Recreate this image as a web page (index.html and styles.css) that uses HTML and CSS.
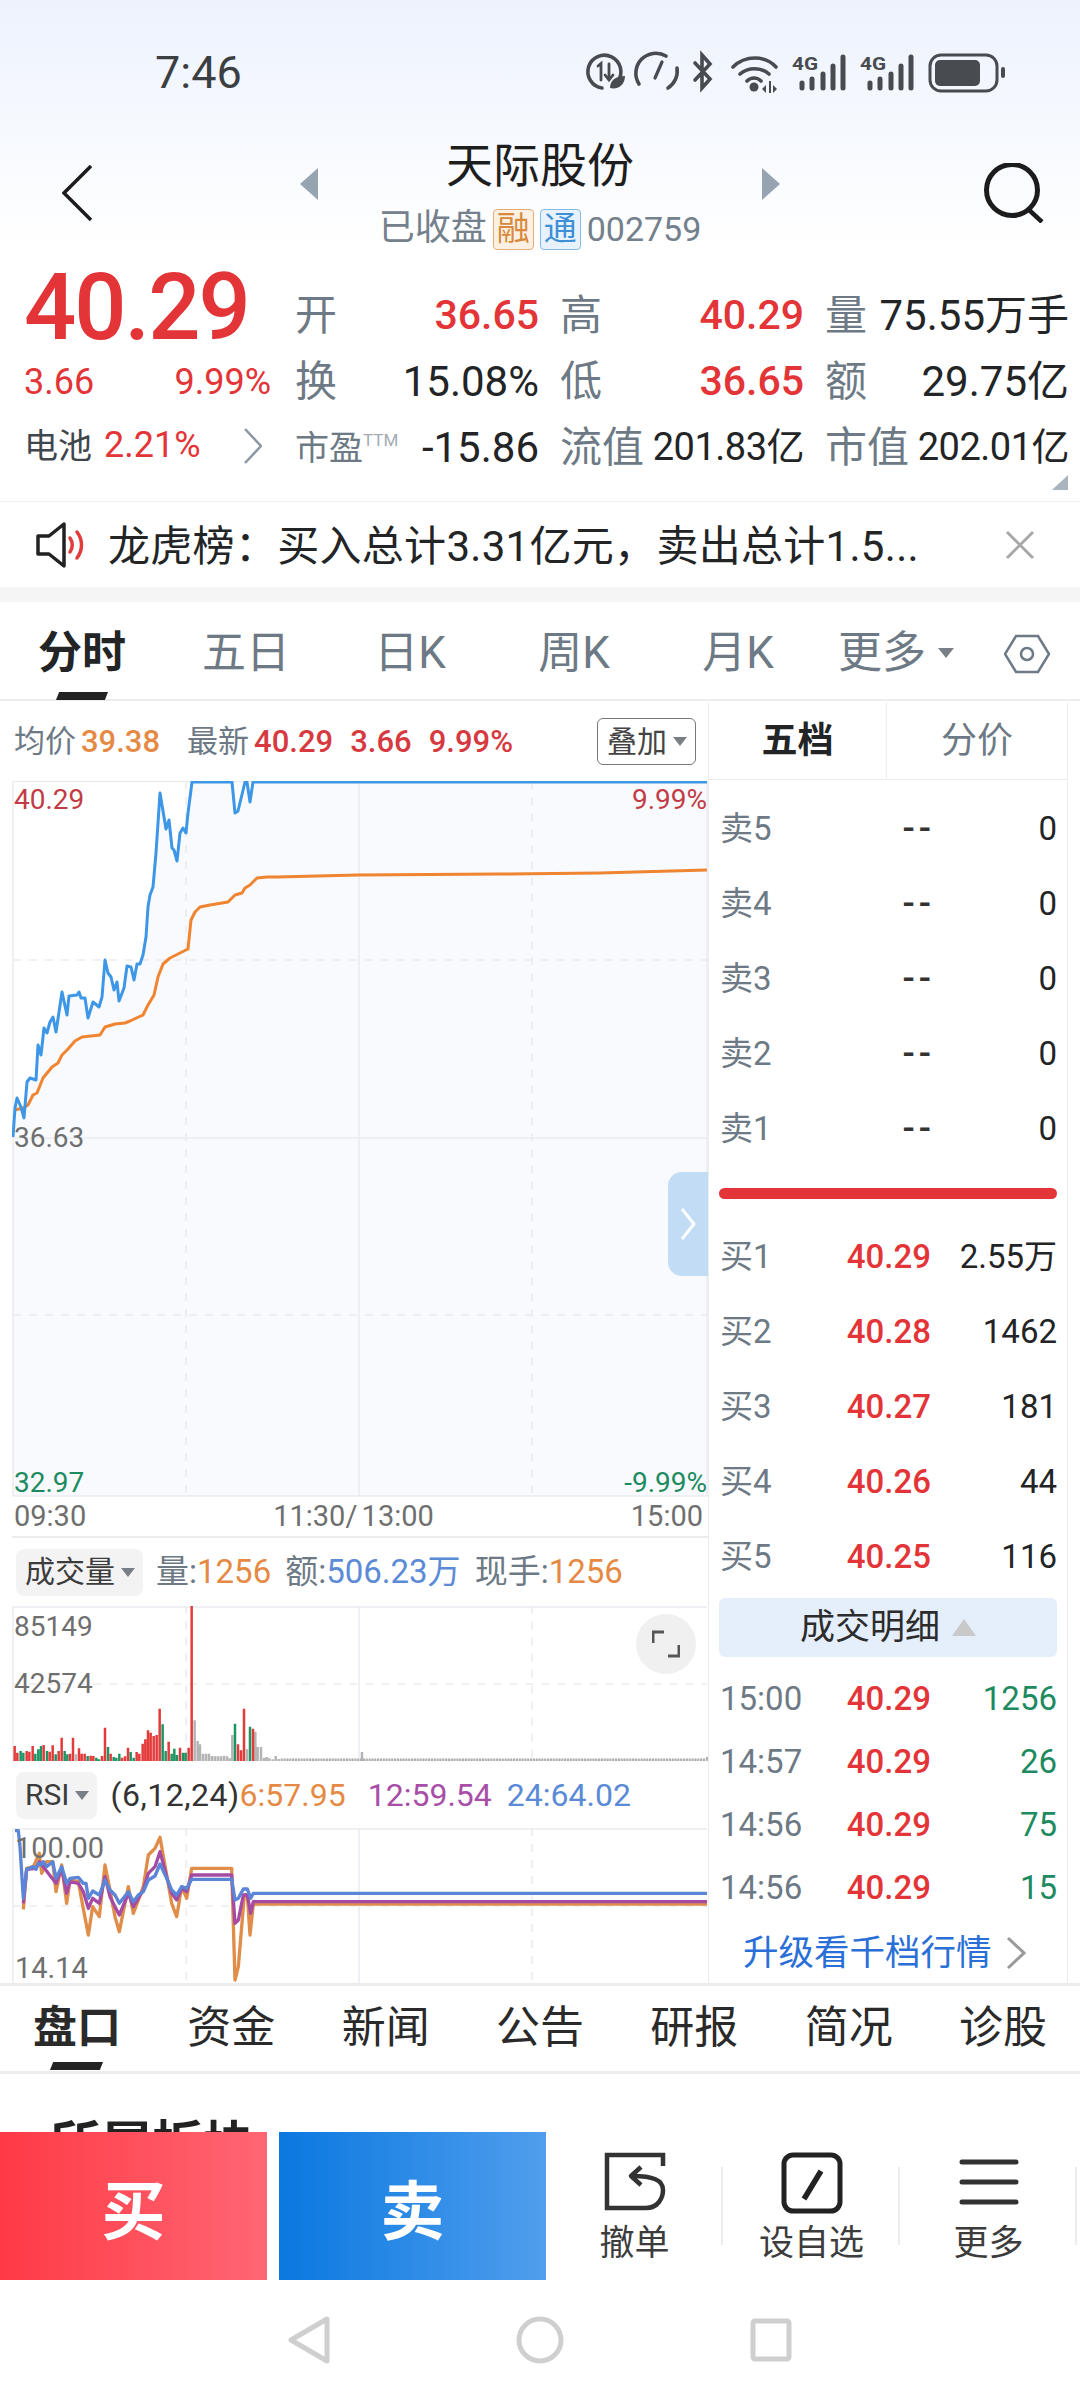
FILE: index.html
```html
<!DOCTYPE html>
<html lang="zh-CN">
<head>
    <meta charset="UTF-8">
    <meta name="viewport" content="width=device-width, initial-scale=1.0">
    <title>天际股份 002759</title>
    <link rel="stylesheet" href="styles.css">
</head>
<body>
    <div class="top">
        <!-- Status bar -->
        <div class="status-bar">
            <span class="clock">7:46</span>
            <svg class="status-icons" viewBox="560 30 480 70" width="480" height="70">
                <g fill="none" stroke="#484b50" stroke-width="3.6" stroke-linecap="round">
                    <path d="M618 81A16.5 16.5 0 1 0 602 88"/>
                    <path d="M598 66l3-2.500V80M609 64V80M605 75l4 5 4-5" stroke-width="2.800"/>
                    <path d="M639 84A20 20 0 0 1 666 56M677 68A20 20 0 0 1 668 88"/>
                    <path d="M662 62L655 78" stroke-width="3.200"/>
                    <path d="M695 63L710 79L702 88V55L710 64L695 80"/>
                    <path d="M733 67C745 55 765 55 776 67M740 74C748 67 761 67 769 74M747 81C751 77 757 77 761 81"/>
                </g>
                <path d="M610 88C610 80 616 76 625 76C625 84 619 90 610 88Z" fill="#484b50"/>
                <circle cx="754" cy="87" r="4.500" fill="#484b50"/>
                <path d="M766 85l-4 4 4 4zM769 81h2v12h-2zM773 85l4 4-4 4z" fill="#484b50"/>
                <g fill="#484b50" font-family="Roboto, sans-serif" font-size="19" font-weight="700">
                    <text x="792" y="70" textLength="26" lengthAdjust="spacingAndGlyphs">4G</text>
                    <text x="860" y="70" textLength="26" lengthAdjust="spacingAndGlyphs">4G</text>
                </g>
                <g stroke="#484b50" stroke-width="5" stroke-linecap="round">
                    <path d="M802 83v5M812 79v9M823 74v14M833 66v22M843 57v31"/>
                    <path d="M870 83v5M880 79v9M891 74v14M901 66v22M911 57v31"/>
                </g>
                <rect x="930" y="55" width="67" height="36" rx="11" fill="none" stroke="#484b50" stroke-width="3"/>
                <rect x="935" y="60" width="45" height="26" rx="5" fill="#484b50"/>
                <rect x="1001" y="67" width="4" height="11" rx="2" fill="#484b50"/>
            </svg>
        </div>

        <!-- Title row -->
        <header class="stock-nav">
            <div class="nav-left">
                <svg width="30" height="56" viewBox="0 0 30 56"><path d="M29 1L2 28L29 55" fill="none" stroke="#1c1c1c" stroke-width="3.500"/></svg>
            </div>
            <div class="nav-center">
                <svg class="nav-arrow" width="18" height="32" viewBox="0 0 18 32"><path d="M18 0V32L0 16Z" fill="#96a4b2"/></svg>
                <div class="stock-title">
                    <h1>天际股份</h1>
                    <div class="stock-sub">
                        <span>已收盘</span>
                        <span class="tag tag-rong">融</span>
                        <span class="tag tag-tong">通</span>
                        <span class="stock-code">002759</span>
                    </div>
                </div>
                <svg class="nav-arrow" width="18" height="32" viewBox="0 0 18 32"><path d="M0 0V32L18 16Z" fill="#96a4b2"/></svg>
            </div>
            <div class="nav-right">
                <svg width="62" height="60" viewBox="0 0 62 60" fill="none" stroke="#1c1c1c" stroke-width="5"><circle cx="29" cy="27" r="25.500"/><path d="M45 46L59 59" stroke-width="4.500"/></svg>
            </div>
        </header>

        <!-- Quote block -->
        <section class="quote">
            <div class="quote-left">
                <div class="price">40.29</div>
                <div class="change"><span>3.66</span><span>9.99%</span></div>
                <div class="concept">
                    <span class="concept-name">电池</span>
                    <span class="concept-pct">2.21%</span>
                    <svg width="18" height="36" viewBox="0 0 18 36"><path d="M1 1L17 18L1 35" fill="none" stroke="#8c98a4" stroke-width="2.500"/></svg>
                </div>
            </div>
            <div class="quote-grid">
                <div class="cell"><span class="lbl">开</span><span class="val up">36.65</span></div>
                <div class="cell"><span class="lbl">高</span><span class="val up">40.29</span></div>
                <div class="cell"><span class="lbl">量</span><span class="val">75.55万手</span></div>
                <div class="cell"><span class="lbl">换</span><span class="val">15.08%</span></div>
                <div class="cell"><span class="lbl">低</span><span class="val up">36.65</span></div>
                <div class="cell"><span class="lbl">额</span><span class="val">29.75亿</span></div>
                <div class="cell"><span class="lbl lbl-small">市盈<sup>TTM</sup></span><span class="val">-15.86</span></div>
                <div class="cell"><span class="lbl">流值</span><span class="val val-small">201.83亿</span></div>
                <div class="cell"><span class="lbl">市值</span><span class="val val-small">202.01亿</span></div>
            </div>
            <span class="corner"></span>
        </section>
    </div>

    <!-- Notice -->
    <div class="notice">
        <svg width="50" height="46" viewBox="0 0 50 46" fill="none">
            <path d="M2 14H13L28 2V44L13 32H2Z" stroke="#222" stroke-width="3.500" stroke-linejoin="round"/>
            <path d="M34 16C37 20 37 26 34 30M41 10C47 18 47 28 41 36" stroke="#e33a3a" stroke-width="3.500" stroke-linecap="round"/>
        </svg>
        <p class="notice-text">龙虎榜：买入总计3.31亿元，卖出总计1.5...</p>
        <svg width="30" height="30" viewBox="0 0 30 30"><path d="M2 2L28 28M28 2L2 28" stroke="#a8a8a8" stroke-width="3"/></svg>
    </div>

    <!-- Period tabs -->
    <nav class="period-tabs">
        <a class="period active">分时</a>
        <a class="period">五日</a>
        <a class="period">日K</a>
        <a class="period">周K</a>
        <a class="period">月K</a>
        <a class="period-more">更多<i class="caret"></i></a>
        <svg class="hex" width="46" height="40" viewBox="0 0 46 40" fill="none" stroke="#6d7a85" stroke-width="2.500"><path d="M12 2H34L45 20L34 38H12L1 20Z"/><circle cx="23" cy="20" r="6"/></svg>
    </nav>

    <div class="board">
        <div class="charts">
            <div class="chart-info">
                <span class="gray">均价</span><span class="orange">39.38</span>
                <span class="gray gap-l">最新</span><span class="red">40.29</span>
                <span class="red gap-m">3.66</span>
                <span class="red gap-m">9.99%</span>
                <span class="overlay-btn">叠加<i class="caret"></i></span>
            </div>

            <!-- Intraday price chart -->
            <div class="main-chart">
                <svg viewBox="12 781 696 716" width="696" height="716">
                    <path class="area" d="M13 1137L15 1108L17 1098L21 1107L24 1118L27 1082L30 1078L36 1080L38 1045L41 1055L44 1028L47 1033L50 1022L53 1017L56 1032L62 992L67 1015L69 996L77 995L79 992L81 998L85 998L88 1018L93 1002L99 1007L102 997L105 960L108 973L111 977L114 990L117 982L119 1001L124 988L127 966L131 967L134 980L137 964L140 964L143 955L146 937L148 907L150 895L153 887L156 853L160 793L166 829L169 820L172 848L174 850L177 861L180 833L183 828L186 833L188 813L192 782H232L235 813L238 811L245 782H247L250 802L253 782H707V1496H13Z"/>
                    <g class="grid">
                        <path d="M13 781V1496M707 781V1496M359 781V1496M13 781.500H707M13 1138H707M13 1496H707"/>
                        <path class="dash" d="M186 781V1496M532 781V1496M13 960H707M13 1315H707"/>
                    </g>
                    <path class="line-avg" d="M15 1110L23 1108L28 1105L33 1095L37 1093L43 1078L52 1067L58 1063L62 1055L68 1049L75 1041L82 1037L100 1035L105 1027L115 1024L125 1023L130 1021L143 1015L148 1005L154 995L158 977L163 964L170 958L188 949L191 920L195 912L200 907L210 905L228 902L235 895L242 893L245 888L250 885L257 878L267 877L277 877L358 875L500 874L600 873L707 870"/>
                    <path class="line-price" d="M13 1137L15 1108L17 1098L21 1107L24 1118L27 1082L30 1078L36 1080L38 1045L41 1055L44 1028L47 1033L50 1022L53 1017L56 1032L62 992L67 1015L69 996L77 995L79 992L81 998L85 998L88 1018L93 1002L99 1007L102 997L105 960L108 973L111 977L114 990L117 982L119 1001L124 988L127 966L131 967L134 980L137 964L140 964L143 955L146 937L148 907L150 895L153 887L156 853L160 793L166 829L169 820L172 848L174 850L177 861L180 833L183 828L186 833L188 813L192 782H232L235 813L238 811L245 782H247L250 802L253 782H707"/>
                </svg>
                <span class="axis-label tl up-dark">40.29</span>
                <span class="axis-label tr up-dark">9.99%</span>
                <span class="axis-label ml">36.63</span>
                <span class="axis-label bl down">32.97</span>
                <span class="axis-label br down">-9.99%</span>
                <div class="side-handle">
                    <svg width="16" height="34" viewBox="0 0 16 34"><path d="M2 2L14 17L2 32" fill="none" stroke="#fff" stroke-width="3"/></svg>
                </div>
            </div>

            <div class="time-axis"><span>09:30</span><span class="time-mid">11:30/ 13:00</span><span>15:00</span></div>

            <div class="sub-head vol-head">
                <span class="picker">成交量<i class="caret"></i></span>
                <span class="gray sub-l">量:</span><span class="orange">1256</span>
                <span class="gray gap-s">额:</span><span class="blue">506.23万</span>
                <span class="gray gap-s">现手:</span><span class="orange">1256</span>
            </div>

            <!-- Volume bars -->
            <div class="vol-chart">
                <svg viewBox="12 1606 696 156" width="696" height="156">
                    <g class="grid">
                        <path d="M13 1606V1762M359 1606V1762M13 1607H707"/>
                        <path class="dash" d="M186 1606V1762M532 1606V1762M13 1684H707"/>
                    </g>
                    <g transform="translate(0 1590) scale(.33333)" fill="none" stroke-width="7.500">
                        <path stroke="#b4b4b4" d="M228 513v-20M584 513v-122M593 513v-60M600 513v-50M609 513v-22M618 513v-22M627 513v-22M636 513v-15M645 513v-14M654 513v-14M663 513v-14M672 513v-16M681 513v-14M689 513v-8M697 513v-78M741 513v-35M766 513v-88M773 513v-42M783 513v-42M792 513v-10M800 513v-12M808 513v-8M818 513v-5M827 513v-15M836 513v-6M1086 513v-27M2121 513v-12"/>
                        <path stroke="#adadad" stroke-dasharray="6.500 2" d="M842 509.500H2115"/>
                        <path stroke="#1f9463" d="M62 513v-30M70 513v-25M106 513v-22M115 513v-35M123 513v-45M141 513v-30M167 513v-20M194 513v-30M202 513v-20M263 513v-15M289 513v-10M297 513v-5M324 513v-42M341 513v-12M349 513v-10M358 513v-22M392 513v-27M401 513v-10M488 513v-110M497 513v-30M515 513v-22M523 513v-37M531 513v-18M549 513v-25M557 513v-25M705 513v-112M750 513v-103"/>
                        <path stroke="#e33a3a" d="M44 513v-45M52 513v-25M80 513v-30M88 513v-28M98 513v-45M131 513v-48M149 513v-28M158 513v-47M176 513v-30M185 513v-70M210 513v-22M219 513v-70M237 513v-38M245 513v-22M254 513v-22M272 513v-16M280 513v-15M306 513v-15M315 513v-100M332 513v-22M366 513v-10M375 513v-14M384 513v-40M410 513v-27M418 513v-22M428 513v-52M436 513v-65M444 513v-92M452 513v-85M461 513v-75M470 513v-78M479 513v-157M506 513v-58M540 513v-40M566 513v-40M575 513v-465M714 513v-50M723 513v-32M732 513v-157M759 513v-97"/>
                    </g>
                </svg>
                <span class="axis-label vol-max">85149</span>
                <span class="axis-label vol-mid">42574</span>
                <span class="expand-btn">
                    <svg width="28" height="28" viewBox="0 0 28 28" fill="none" stroke="#555" stroke-width="3"><path d="M1 13V2H12M27 15V26H16"/></svg>
                </span>
            </div>

            <div class="sub-head rsi-head">
                <span class="picker">RSI<i class="caret"></i></span>
                <span class="dark rsi-params">(6,12,24)</span><span class="orange">6:57.95</span>
                <span class="purple gap-rsi">12:59.54</span>
                <span class="blue gap-rsi2">24:64.02</span>
            </div>

            <!-- RSI lines -->
            <div class="rsi-chart">
                <svg viewBox="12 1828 696 156" width="696" height="156">
                    <g class="grid">
                        <path d="M13 1828V1984M359 1828V1984M13 1829H707"/>
                        <path class="dash" d="M186 1828V1984M532 1828V1984M13 1906H707"/>
                    </g>
                    <g transform="translate(0 1590) scale(.33333)" fill="none" stroke-width="10" stroke-linejoin="round">
                        <path stroke="#e08d4a" d="M70 958L80 835L100 830L118 790L125 850L140 815L158 815L168 905L185 825L200 940L210 870L235 875L245 930L265 1035L278 950L298 980L315 825L330 900L345 980L358 1025L385 890L400 970L430 890L445 795L465 775L480 742L500 855L515 940L530 980L545 890L560 925L575 835H695L705 1170L715 1130L733 915H742L750 1035L760 942H2121"/>
                        <path stroke="#a64ba3" d="M70 940L80 838L108 835L118 815L168 880L185 835L200 910L210 875L235 880L250 905L265 955L278 925L298 940L315 860L330 920L345 950L358 975L385 910L400 950L430 900L445 850L465 830L480 785L500 860L515 910L530 930L545 895L560 905L575 855H695L705 1000L715 990L730 915H742L752 970L760 935H2121"/>
                        <path stroke="#5b85d6" d="M45 722H55L60 770L70 925L80 838L100 830L108 838L115 820L122 825L130 815L140 830L158 815L168 865L185 830L200 880L210 865L235 862L250 880H258L265 925L278 903L298 915L315 870L330 900L345 915L358 940L385 905L400 935L415 915L430 905L445 870L465 858L480 822L500 865L515 900L530 915L545 890L560 895L575 868H695L705 930L715 925L730 897H742L752 925L760 910H2121"/>
                    </g>
                </svg>
                <span class="axis-label rsi-max">100.00</span>
                <span class="axis-label rsi-min">14.14</span>
            </div>
        </div>

        <!-- Order book -->
        <aside class="depth">
            <div class="depth-tabs"><span class="active">五档</span><span>分价</span></div>
            <div class="sell-list">
                <div class="row"><span class="lbl">卖5</span><span class="p dash">--</span><span class="v">0</span></div>
                <div class="row"><span class="lbl">卖4</span><span class="p dash">--</span><span class="v">0</span></div>
                <div class="row"><span class="lbl">卖3</span><span class="p dash">--</span><span class="v">0</span></div>
                <div class="row"><span class="lbl">卖2</span><span class="p dash">--</span><span class="v">0</span></div>
                <div class="row"><span class="lbl">卖1</span><span class="p dash">--</span><span class="v">0</span></div>
            </div>
            <div class="ratio-bar"></div>
            <div class="buy-list">
                <div class="row"><span class="lbl">买1</span><span class="p">40.29</span><span class="v">2.55万</span></div>
                <div class="row"><span class="lbl">买2</span><span class="p">40.28</span><span class="v">1462</span></div>
                <div class="row"><span class="lbl">买3</span><span class="p">40.27</span><span class="v">181</span></div>
                <div class="row"><span class="lbl">买4</span><span class="p">40.26</span><span class="v">44</span></div>
                <div class="row"><span class="lbl">买5</span><span class="p">40.25</span><span class="v">116</span></div>
            </div>
            <div class="detail-head">成交明细<i class="caret-up"></i></div>
            <div class="trades">
                <div class="row"><span class="lbl">15:00</span><span class="p">40.29</span><span class="v down">1256</span></div>
                <div class="row"><span class="lbl">14:57</span><span class="p">40.29</span><span class="v down">26</span></div>
                <div class="row"><span class="lbl">14:56</span><span class="p">40.29</span><span class="v down">75</span></div>
                <div class="row"><span class="lbl">14:56</span><span class="p">40.29</span><span class="v down">15</span></div>
            </div>
            <a class="upgrade">升级看千档行情
                <svg width="20" height="34" viewBox="0 0 20 34"><path d="M2 2L18 17L2 32" fill="none" stroke="#9a9a9a" stroke-width="3"/></svg>
            </a>
        </aside>
    </div>

    <!-- Info tabs -->
    <nav class="info-tabs">
        <a class="info active">盘口</a>
        <a class="info">资金</a>
        <a class="info">新闻</a>
        <a class="info">公告</a>
        <a class="info">研报</a>
        <a class="info">简况</a>
        <a class="info">诊股</a>
    </nav>

    <div class="section-peek"><h2>所属板块</h2></div>

    <!-- Trade bar -->
    <div class="trade-bar">
        <button class="trade buy">买</button>
        <button class="trade sell">卖</button>
        <div class="action">
            <svg width="62" height="62" viewBox="0 0 62 62" fill="none" stroke="#333" stroke-width="4.500">
                <path d="M59 14V3H3V56H42C54 56 59 46 59 38C59 28 49 24 28 24"/>
                <path d="M37 15L27 24L37 33" stroke-linejoin="round"/>
            </svg>
            <span>撤单</span>
        </div>
        <div class="action">
            <svg width="62" height="62" viewBox="0 0 62 62" fill="none" stroke="#222">
                <rect x="3" y="3" width="56" height="56" rx="9" stroke-width="5"/>
                <path d="M40 19L23 47" stroke-width="5.500"/>
            </svg>
            <span>设自选</span>
        </div>
        <div class="action">
            <svg width="62" height="62" viewBox="0 0 62 62" stroke="#333" stroke-width="5" stroke-linecap="round"><path d="M4 10H58M4 30H58M4 50H58"/></svg>
            <span>更多</span>
        </div>
    </div>

    <!-- System navigation -->
    <div class="sys-nav">
        <svg width="42" height="48" viewBox="0 0 42 48" fill="none" stroke="#cfcfcf" stroke-width="5" stroke-linejoin="round"><path d="M39 3V45L3 24Z"/></svg>
        <svg width="48" height="48" viewBox="0 0 48 48" fill="none" stroke="#cfcfcf" stroke-width="5"><circle cx="24" cy="24" r="21"/></svg>
        <svg width="42" height="44" viewBox="0 0 42 44" fill="none" stroke="#cfcfcf" stroke-width="5"><rect x="3" y="3" width="36" height="38" rx="2"/></svg>
    </div>
</body>
</html>
```

FILE: styles.css
```css
:root {
    --red: #e33437;
    --red-dark: #c23c46;
    --green: #1d8a5f;
    --orange: #e58a45;
    --blue: #5b8bd6;
    --purple: #a84ea8;
    --label: #6d7a85;
    --text: #222426;
    --line: #ececec;
}

* {
    box-sizing: border-box;
}

body {
    margin: 0;
    width: 1080px;
    height: 2400px;
    overflow: hidden;
    background-color: #fff;
    color: var(--text);
    font-family: Roboto, "Noto Sans CJK SC", sans-serif;
    line-height: 1.2;
}

svg {
    display: block;
    flex-shrink: 0;
}

h1, h2, p {
    margin: 0;
    font-weight: 400;
}

/* Header area */
.top {
    height: 501px;
    background: linear-gradient(to bottom, #edf2fd 0, #f6f9fe 130px, #fff 250px);
}

.status-bar {
    display: flex;
    height: 146px;
    padding: 0 40px 0 155px;
}

.clock {
    font-size: 45px;
    line-height: 146px;
    color: #3c3f42;
}

.status-icons {
    margin: 30px 0 0 auto;
}

.stock-nav {
    display: grid;
    grid-template-columns: 300px 480px 300px;
    height: 108px;
}

.nav-left {
    padding: 19px 0 0 62px;
}

.nav-right {
    display: flex;
    justify-content: flex-end;
    padding: 17px 35px 0 0;
}

.nav-center {
    display: flex;
    justify-content: space-between;
}

.nav-arrow {
    margin-top: 22px;
}

.stock-title {
    text-align: center;
}

.stock-title h1 {
    font-size: 47px;
    line-height: 40px;
    color: #1e1e1e;
}

.stock-sub {
    display: flex;
    align-items: center;
    justify-content: center;
    gap: 6px;
    height: 40px;
    margin-top: 23px;
    font-size: 36px;
    color: #74808b;
}

.stock-code {
    font-size: 34px;
}

.tag {
    width: 41px;
    height: 41px;
    border: 1px solid;
    border-radius: 4px;
    font-size: 33px;
    line-height: 38px;
    text-align: center;
}

.tag-rong {
    color: #d8893c;
    background-color: #fbf0e2;
    border-color: #e4ad73;
}

.tag-tong {
    color: #3d8fd8;
    background-color: #e7f2fc;
    border-color: #86bbe6;
}

/* Quote block */
.quote {
    position: relative;
    display: flex;
    padding-top: 12px;
}

.quote-left {
    width: 295px;
    padding-left: 24px;
    flex-shrink: 0;
}

.price {
    height: 83px;
    font-size: 92px;
    line-height: 83px;
    font-weight: 500;
    letter-spacing: -2px;
    color: var(--red);
}

.change {
    display: flex;
    justify-content: space-between;
    width: 247px;
    height: 66px;
    font-size: 36px;
    line-height: 66px;
    color: var(--red);
}

.concept {
    display: flex;
    align-items: center;
    height: 62px;
}

.concept-name {
    width: 80px;
    font-size: 34px;
    color: #3f474d;
}

.concept-pct {
    width: 140px;
    font-size: 36px;
    color: var(--red);
}

.quote-grid {
    display: grid;
    grid-template-columns: 244px 244px 244px;
    grid-auto-rows: 66px;
    column-gap: 21px;
    margin-top: 17px;
}

.cell {
    display: flex;
    align-items: center;
    justify-content: space-between;
    white-space: nowrap;
}

.lbl {
    color: var(--label);
}

.cell .lbl {
    font-size: 42px;
}

.cell .lbl-small {
    font-size: 34px;
}

.lbl-small sup {
    font-size: 17px;
    color: #a3abb3;
    vertical-align: 14px;
    line-height: 0;
}

.val {
    font-size: 42px;
    color: var(--text);
}

.val.up {
    color: var(--red);
    font-size: 41px;
    font-weight: 500;
}

.val-small {
    font-size: 38px;
    letter-spacing: -0.5px;
}

.corner {
    position: absolute;
    right: 12px;
    top: 221px;
    border-left: 16px solid transparent;
    border-bottom: 15px solid #a9b4bf;
}

/* Notice */
.notice {
    display: flex;
    align-items: center;
    height: 101px;
    padding: 0 45px 0 36px;
    border-top: 1px solid #f0f0f0;
    border-bottom: 15px solid #f5f5f5;
}

.notice-text {
    flex: 1;
    margin: 5px 0 0 22px;
    font-size: 42px;
    letter-spacing: 0.3px;
    color: var(--text);
    white-space: nowrap;
}

/* Period tabs */
.period-tabs {
    display: flex;
    align-items: center;
    height: 99px;
    border-bottom: 2px solid var(--line);
    position: relative;
    padding-top: 6px;
}

.period {
    position: relative;
    width: 164px;
    font-size: 44px;
    text-align: center;
    color: var(--label);
}

.period.active {
    font-weight: 700;
    color: var(--text);
}

.period.active::after {
    content: "";
    position: absolute;
    left: 56px;
    bottom: -20px;
    width: 52px;
    height: 8px;
    background-color: #222;
    clip-path: polygon(6% 0, 100% 0, 94% 100%, 0 100%);
}

.period-more {
    display: flex;
    align-items: center;
    margin-left: 18px;
    font-size: 44px;
    color: var(--label);
}

.caret {
    display: inline-block;
    margin-left: 6px;
    border-left: 7px solid transparent;
    border-right: 7px solid transparent;
    border-top: 9px solid #7a7f85;
}

.period-more .caret {
    margin-left: 12px;
    border-left-width: 8px;
    border-right-width: 8px;
    border-top-width: 10px;
}

.hex {
    margin-left: 50px;
}

/* Chart + order book */
.board {
    display: flex;
    height: 1285px;
    padding: 1px 0 0 12px;
    border-bottom: 3px solid var(--line);
    width: 1080px;
}

.charts {
    width: 696px;
    flex-shrink: 0;
}

.gray { color: var(--label); }
.orange { color: var(--orange); }
.red { color: #d63a40; }
.blue { color: var(--blue); }
.purple { color: var(--purple); }
.dark { color: #333; }
.up-dark { color: var(--red-dark); }
.down { color: var(--green); }

.chart-info {
    display: flex;
    align-items: center;
    height: 79px;
    padding-left: 2px;
    font-size: 31px;
    white-space: nowrap;
}

.chart-info .orange,
.chart-info .red {
    font-weight: 500;
}

.chart-info .gray + span {
    margin-left: 5px;
}

.gap-l { margin-left: 27px; }
.gap-m { margin-left: 17px; }
.gap-s { margin-left: 14px; }

.overlay-btn {
    display: flex;
    align-items: center;
    height: 47px;
    margin-left: auto;
    margin-right: 12px;
    padding: 0 8px 0 9px;
    border: 1px solid #777;
    border-radius: 6px;
    font-size: 30px;
    color: #444;
}

.main-chart,
.vol-chart,
.rsi-chart {
    position: relative;
}

.main-chart { height: 716px; }
.vol-chart { height: 156px; }
.rsi-chart { height: 156px; }

.area {
    fill: #f8fafe;
}

.grid path {
    fill: none;
    stroke: #e9ecf0;
    stroke-width: 1.5;
}

.grid .dash {
    stroke-dasharray: 8 8;
}

.line-price,
.line-avg {
    fill: none;
    stroke-width: 3;
    stroke-linejoin: round;
}

.line-price { stroke: #3d97e6; }
.line-avg { stroke: #ef8431; }

.axis-label {
    position: absolute;
    font-size: 28px;
    line-height: 32px;
    color: #6f6f6f;
}

.axis-label.up-dark { color: var(--red-dark); }
.axis-label.down { color: var(--green); }

.tl { left: 2px; top: 3px; }
.tr { right: 1px; top: 3px; }
.ml { left: 2px; top: 341px; }
.bl { left: 2px; top: 686px; }
.br { right: 1px; top: 686px; }
.vol-max { left: 2px; top: 5px; }
.vol-mid { left: 2px; top: 62px; }
.rsi-max { left: 3px; top: 4px; font-size: 29px; }
.rsi-min { left: 3px; top: 124px; font-size: 29px; }

.side-handle {
    position: absolute;
    right: 0;
    top: 391px;
    display: flex;
    align-items: center;
    justify-content: center;
    width: 40px;
    height: 104px;
    background-color: #c3dcf6;
    border-radius: 14px 0 0 14px;
}

.expand-btn {
    position: absolute;
    left: 624px;
    top: 8px;
    display: flex;
    align-items: center;
    justify-content: center;
    width: 60px;
    height: 60px;
    background-color: #f0f0f0;
    border-radius: 50%;
}

.time-axis {
    display: flex;
    justify-content: space-between;
    height: 41px;
    padding: 0 5px 0 2px;
    font-size: 29px;
    line-height: 38px;
    color: #6f6f6f;
    border-bottom: 2px solid var(--line);
}

.time-mid {
    word-spacing: -3px;
    margin-right: 10px;
}

.sub-head {
    display: flex;
    align-items: center;
    white-space: nowrap;
}

.vol-head {
    height: 68px;
    font-size: 33px;
}

.rsi-head {
    height: 66px;
    font-size: 32px;
}

.picker {
    display: flex;
    align-items: center;
    height: 47px;
    margin-left: 4px;
    padding: 0 8px 0 9px;
    background-color: #f3f3f3;
    border-radius: 8px;
    font-size: 30px;
    color: #3c3c3c;
}

.sub-l { margin-left: 13px; }
.rsi-params { margin-left: 13px; letter-spacing: 0.5px; }
.gap-rsi { margin-left: 22px; }
.gap-rsi2 { margin-left: 15px; }

/* Order book */
.depth {
    width: 360px;
    border-left: 1px solid var(--line);
    border-right: 1px solid var(--line);
    flex-shrink: 0;
}

.depth-tabs {
    display: flex;
    height: 78px;
    border-bottom: 1px solid var(--line);
}

.depth-tabs span {
    width: 178px;
    font-size: 36px;
    line-height: 78px;
    text-align: center;
    color: var(--label);
}

.depth-tabs .active {
    border-right: 1px solid var(--line);
    font-weight: 700;
    color: var(--text);
}

.depth-tabs span:last-child {
    flex: 1;
}

.row {
    display: grid;
    grid-template-columns: 103px 108px 1fr;
    align-items: center;
    padding: 0 10px 0 11px;
    font-size: 33px;
    line-height: 40px;
}

.sell-list,
.buy-list {
    display: grid;
    grid-auto-rows: 75px;
}

.sell-list {
    margin-top: 11px;
}

.row .p {
    color: var(--red);
    text-align: right;
    font-weight: 500;
}

.row .p.dash {
    color: #333;
    font-weight: 500;
    letter-spacing: 4px;
    margin-right: -4px;
    font-size: 36px;
}

.row .v {
    text-align: right;
    color: var(--text);
}

.row .v.down {
    color: var(--green);
}

.ratio-bar {
    height: 11px;
    margin: 22px 10px 20px;
    background-color: var(--red);
    border-radius: 6px;
}

.detail-head {
    display: flex;
    align-items: center;
    justify-content: center;
    height: 59px;
    margin: 4px 10px 0;
    background-color: #e5eefb;
    border-radius: 6px;
    font-size: 35px;
    color: #2c2c2c;
}

.caret-up {
    margin-left: 12px;
    border-left: 12px solid transparent;
    border-right: 12px solid transparent;
    border-bottom: 17px solid #c9c9c9;
}

.trades {
    display: grid;
    grid-auto-rows: 63px;
    margin-top: 10px;
}

.upgrade {
    display: flex;
    align-items: center;
    height: 65px;
    padding: 3px 0 0 34px;
    font-size: 35.500px;
    color: #2a6fd8;
}

.upgrade svg {
    margin-left: 14px;
}

/* Info tabs */
.info-tabs {
    display: flex;
    align-items: center;
    height: 88px;
    padding: 0 33px;
    justify-content: space-between;
    border-bottom: 3px solid var(--line);
}

.info {
    position: relative;
    font-size: 44px;
    color: #2a2a2a;
}

.info.active {
    font-weight: 700;
}

.info.active::after {
    content: "";
    position: absolute;
    left: 17px;
    bottom: -15px;
    width: 53px;
    height: 8px;
    background-color: #222;
    clip-path: polygon(6% 0, 100% 0, 94% 100%, 0 100%);
}

.section-peek {
    height: 58px;
    overflow: hidden;
    padding: 42px 0 0 50px;
}

.section-peek h2 {
    font-size: 51px;
    font-weight: 700;
    line-height: 60px;
    color: #222;
}

/* Trade bar */
.trade-bar {
    display: flex;
    height: 148px;
    background-color: #fff;
}

.trade {
    width: 267px;
    padding: 0;
    border: 0;
    font-family: inherit;
    font-size: 64px;
    font-weight: 700;
    color: #fff;
}

.buy {
    background: linear-gradient(to right, #ff3a46, #ff6673);
}

.sell {
    margin-left: 12px;
    background: linear-gradient(to right, #0a78e0, #509eed);
}

.action {
    position: relative;
    display: flex;
    flex-direction: column;
    align-items: center;
    width: 177px;
    padding-top: 20px;
    font-size: 35px;
    color: #3c3c3c;
}

.action span {
    margin-top: 8px;
    line-height: 44px;
}

.action::after {
    content: "";
    position: absolute;
    right: 0;
    top: 35px;
    width: 2px;
    height: 78px;
    background-color: #ececec;
}

/* System navigation */
.sys-nav {
    display: flex;
    align-items: center;
    justify-content: center;
    gap: 186px;
    height: 120px;
}
```
